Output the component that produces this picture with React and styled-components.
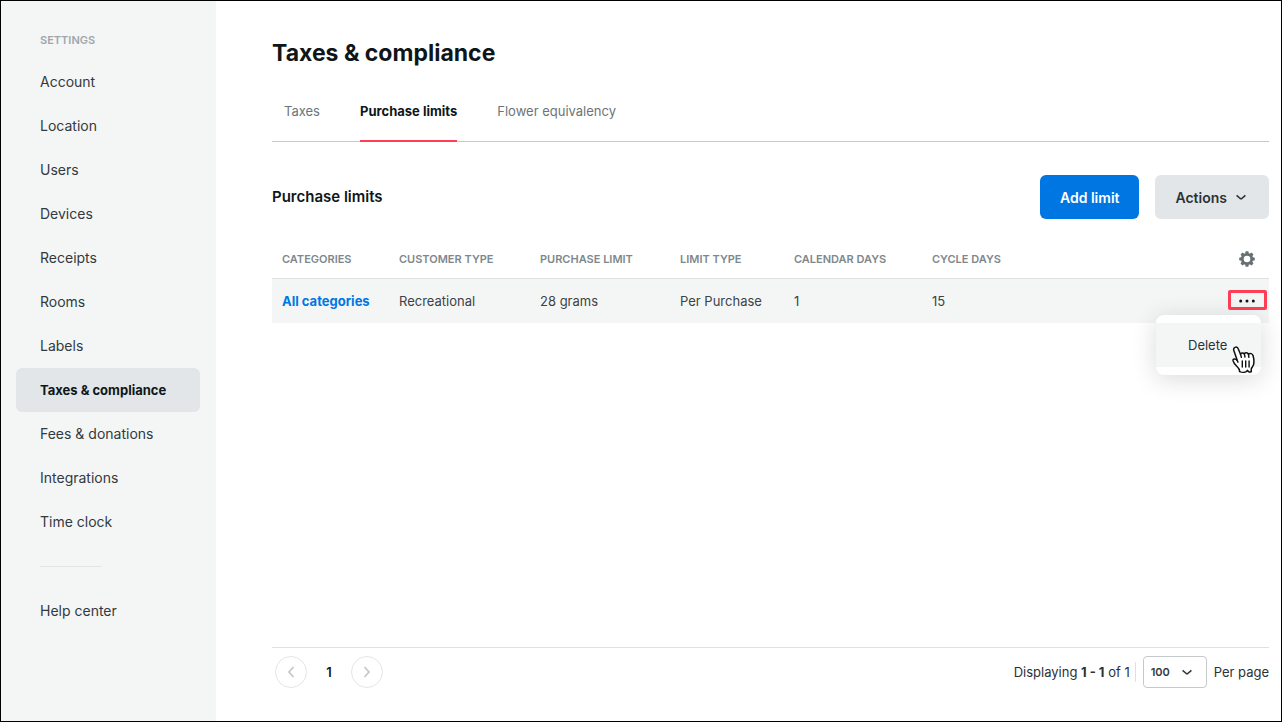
import React, { useState } from 'react';
import styled, { createGlobalStyle } from 'styled-components';

const GlobalStyle = createGlobalStyle`
  * {
    box-sizing: border-box;
  }

  body {
    margin: 0;
    background: #ffffff;
    color: #101618;
    font-family: Inter, "Liberation Sans", sans-serif;
    font-size: 14px;
    line-height: 20px;
  }

  button, select {
    font-family: inherit;
    margin: 0;
  }
`;

const Page = styled.div`
  display: flex;
  min-height: 100vh;
  outline: 1px solid #000000;
  outline-offset: -1px;
`;

// Sidebar
const Sidebar = styled.nav`
  flex: 0 0 216px;
  padding: 32px 16px;
  background: #f4f6f6;
`;

const SidebarTitle = styled.h2`
  margin: 0 24px 12px;
  color: #9fa7ab;
  font-size: 11px;
  font-weight: 600;
  line-height: 16px;
  text-transform: uppercase;
`;

const NavLink = styled.a`
  display: flex;
  align-items: center;
  height: 44px;
  padding: 0 24px;
  border-radius: 6px;
  background: ${(props) => (props.$active ? '#e2e6e9' : 'transparent')};
  color: ${(props) => (props.$active ? '#101618' : '#33393d')};
  font-size: ${(props) => (props.$active ? '13px' : '14px')};
  font-weight: ${(props) => (props.$active ? 700 : 400)};
  text-decoration: none;
  white-space: nowrap;
`;

const NavDivider = styled.hr`
  width: 62px;
  height: 1px;
  margin: 22px 24px;
  border: none;
  background: #e2e6e9;
`;

// Main column
const Main = styled.main`
  display: flex;
  flex: 1;
  flex-direction: column;
  min-width: 0;
  padding: 37px 13px 34px 56px;
`;

const PageTitle = styled.h1`
  margin: 0 0 32px;
  font-size: 23px;
  font-weight: 700;
  line-height: 32px;
`;

const Tabs = styled.div`
  display: flex;
  gap: 40px;
  padding: 0 12px;
  border-bottom: 1px solid #c5c9cb;
`;

const Tab = styled.button`
  margin-bottom: -1px;
  padding: 0 0 19px;
  border: none;
  border-bottom: 2px solid ${(props) => (props.$active ? '#ff3f55' : 'transparent')};
  background: none;
  color: ${(props) => (props.$active ? '#101618' : '#6b7579')};
  font-size: 13px;
  font-weight: ${(props) => (props.$active ? 700 : 400)};
  line-height: 20px;
  cursor: pointer;
`;

const SectionHeader = styled.div`
  display: flex;
  align-items: center;
  justify-content: space-between;
  margin: 33px 0 20px;
`;

const SectionTitle = styled.h2`
  margin: 0;
  font-size: 15px;
  font-weight: 600;
  line-height: 20px;
`;

const ButtonGroup = styled.div`
  display: flex;
  gap: 16px;
`;

const Button = styled.button`
  display: flex;
  align-items: center;
  gap: 6px;
  height: 44px;
  padding: 0 20px;
  border: none;
  border-radius: 6px;
  background: ${(props) => (props.$primary ? '#0076e3' : '#e2e6e9')};
  color: ${(props) => (props.$primary ? '#ffffff' : '#2b3236')};
  font-size: 14px;
  font-weight: 600;
  cursor: pointer;
`;

// Table
const Table = styled.table`
  width: 100%;
  border-collapse: separate;
  border-spacing: 0;
  table-layout: fixed;
`;

const Column = styled.col`
  width: ${(props) => props.$width};
`;

const HeadCell = styled.th`
  height: 40px;
  padding: 0 10px;
  border-bottom: 1px solid #dde1e3;
  color: #7e888c;
  font-size: 11px;
  font-weight: 600;
  line-height: 16px;
  text-align: left;
  text-transform: uppercase;
  white-space: nowrap;
`;

const Cell = styled.td`
  height: 44px;
  padding: 0 10px;
  background: #f4f6f6;
  color: #3c4347;
  font-size: 13px;
  white-space: nowrap;
`;

const SettingsCell = styled(HeadCell)`
  padding: 0 14px;
`;

const MenuCell = styled(Cell)`
  position: relative;
  padding: 0 2px 2px;
`;

const CategoryLink = styled.a`
  color: #0076e3;
  font-weight: 700;
  text-decoration: none;
`;

const IconButton = styled.button`
  display: flex;
  margin-left: auto;
  padding: 0;
  border: none;
  background: none;
  color: #656f74;
  cursor: pointer;
`;

const MoreButton = styled.button`
  display: flex;
  align-items: center;
  justify-content: center;
  width: 39px;
  height: 20px;
  margin-left: auto;
  padding: 0;
  border: 3px solid #ff3f55;
  border-radius: 2px;
  background: none;
  color: #101618;
  cursor: pointer;
`;

const Menu = styled.div`
  position: absolute;
  top: 36px;
  right: 8px;
  z-index: 1;
  width: 105px;
  padding: 8px 0;
  border-radius: 8px;
  background: #ffffff;
  box-shadow: 0 4px 24px rgba(16, 22, 24, 0.16);
`;

const MenuItem = styled.button`
  display: block;
  width: 100%;
  height: 44px;
  padding: 0 32px;
  border: none;
  background: #f4f6f6;
  color: #2b3236;
  font-size: 13px;
  text-align: left;
  cursor: pointer;
`;

const Pointer = styled.svg`
  position: absolute;
  right: 5px;
  bottom: 1px;
  pointer-events: none;
`;

// Footer
const Footer = styled.footer`
  display: flex;
  align-items: center;
  justify-content: space-between;
  margin-top: auto;
  padding: 8px 0 0 3px;
  border-top: 1px solid #dde1e3;
`;

const Pager = styled.div`
  display: flex;
  align-items: center;
`;

const PagerButton = styled.button`
  display: flex;
  align-items: center;
  justify-content: center;
  width: 32px;
  height: 32px;
  padding: 0;
  border: 1px solid #e2e6e9;
  border-radius: 50%;
  background: #ffffff;
  color: #c3c9cc;
`;

const PageNumber = styled.span`
  width: 44px;
  font-size: 13px;
  font-weight: 600;
  text-align: center;
`;

const PageSize = styled.div`
  display: flex;
  align-items: center;
  gap: 7px;
  color: #2b3236;
  font-size: 13px;
`;

const Range = styled.span`
  padding-right: 5px;
  border-right: 1px solid #dde1e3;
`;

const SelectBox = styled.div`
  display: grid;
  align-items: center;
  color: #33393d;

  > * {
    grid-area: 1 / 1;
  }

  > svg {
    justify-self: end;
    margin-right: 12px;
    pointer-events: none;
  }
`;

const Select = styled.select`
  width: 64px;
  height: 32px;
  padding: 0 7px;
  appearance: none;
  border: 1px solid #c5c9cb;
  border-radius: 4px;
  background: #ffffff;
  color: #33393d;
  font-size: 11px;
  font-weight: 600;
`;

const ChevronDown = () => (
  <svg width="16" height="16" viewBox="0 0 16 16" fill="none" stroke="currentColor" strokeWidth="1.6" aria-hidden="true">
    <path d="M3.6 6.3 L7.2 9.5 Q8 10.1 8.8 9.5 L12.4 6.3" />
  </svg>
);

const Chevron = ({ next }) => (
  <svg width="8" height="12" viewBox="0 0 8 12" fill="none" stroke="currentColor" strokeWidth="1.8" aria-hidden="true">
    <path d={next ? 'M1.5 1 L6 6 L1.5 11' : 'M6.5 1 L2 6 L6.5 11'} />
  </svg>
);

const GEAR_TEETH = [0, 45, 90, 135, 180, 225, 270, 315];

const GearIcon = () => (
  <svg width="16" height="16" viewBox="0 0 16 16" aria-hidden="true">
    <circle cx="8" cy="8" r="4.7" fill="none" stroke="currentColor" strokeWidth="2.8" />
    {GEAR_TEETH.map((angle) => (
      <path key={angle} d="M6 2.8 L6.7 0.2 H9.3 L10 2.8 Z" fill="currentColor" transform={`rotate(${angle} 8 8)`} />
    ))}
  </svg>
);

const DotsIcon = () => (
  <svg width="17" height="6" viewBox="0 0 17 6" fill="currentColor" aria-hidden="true">
    <circle cx="1.7" cy="4" r="1.5" />
    <circle cx="8" cy="4" r="1.5" />
    <circle cx="14.3" cy="4" r="1.5" />
  </svg>
);

const HandPointer = () => (
  <Pointer width="24" height="28" viewBox="0 0 24 28" aria-hidden="true">
    <path
      d="M3 1.4 C4.6 0.6 5.8 1.6 6.3 3 L8.5 8.2 C9 6.6 11.3 6.4 12.3 7.9 C13.3 6.4 15.6 6.5 16.4 8.2 C18 6.8 20.6 7.6 21.1 9.8 C21.9 12.8 22.4 16 21.4 19 C20.8 20.8 19.3 22 19.2 23.2 L19.3 25.6 C18 26.5 16.4 26 15.5 24.4 C14.4 26.6 10.7 26.8 7.6 25.6 C7.8 23.2 6.4 21.8 4.8 20.3 C3.1 18.6 1.5 17 1 14.7 C0.7 12.7 3.2 12.3 5.3 14.4 L2 5 C1.3 3.3 1.7 2 3 1.4 Z"
      fill="#ffffff"
      stroke="#101010"
      strokeWidth="1.5"
      strokeLinejoin="round"
    />
    <path
      d="M8.5 8.2 L9.4 11.4 M12.3 7.9 L13 11 M16.4 8.2 L16.9 11.4 M5.3 14.4 L6 16.2 M10.3 15 V21 M13.7 15 V21 M17.1 15 V21"
      fill="none"
      stroke="#101010"
      strokeWidth="1.4"
      strokeLinecap="round"
    />
  </Pointer>
);

const navItems = [
  'Account',
  'Location',
  'Users',
  'Devices',
  'Receipts',
  'Rooms',
  'Labels',
  'Taxes & compliance',
  'Fees & donations',
  'Integrations',
  'Time clock',
];

const tabs = ['Taxes', 'Purchase limits', 'Flower equivalency'];

const columns = [
  { label: 'Categories', width: '117px' },
  { label: 'Customer type', width: '141px' },
  { label: 'Purchase limit', width: '140px' },
  { label: 'Limit type', width: '114px' },
  { label: 'Calendar days', width: '138px' },
  { label: 'Cycle days', width: '120px' },
];

const limits = [
  { id: 1, category: 'All categories', values: ['Recreational', '28 grams', 'Per Purchase', '1', '15'] },
];

const App = () => {
  const [activeTab, setActiveTab] = useState('Purchase limits');
  const [openMenu, setOpenMenu] = useState(1);

  return (
    <>
      <GlobalStyle />
      <Page>
        <Sidebar>
          <SidebarTitle>Settings</SidebarTitle>
          {navItems.map((item) => (
            <NavLink key={item} href="#" $active={item === 'Taxes & compliance'}>
              {item}
            </NavLink>
          ))}
          <NavDivider />
          <NavLink href="#">Help center</NavLink>
        </Sidebar>

        <Main>
          <PageTitle>Taxes &amp; compliance</PageTitle>
          <Tabs role="tablist">
            {tabs.map((tab) => (
              <Tab
                key={tab}
                role="tab"
                aria-selected={tab === activeTab}
                $active={tab === activeTab}
                onClick={() => setActiveTab(tab)}
              >
                {tab}
              </Tab>
            ))}
          </Tabs>

          <SectionHeader>
            <SectionTitle>Purchase limits</SectionTitle>
            <ButtonGroup>
              <Button $primary>Add limit</Button>
              <Button>
                Actions
                <ChevronDown />
              </Button>
            </ButtonGroup>
          </SectionHeader>

          <Table>
            <colgroup>
              {columns.map((column) => (
                <Column key={column.label} $width={column.width} />
              ))}
              <Column $width="auto" />
            </colgroup>
            <thead>
              <tr>
                {columns.map((column) => (
                  <HeadCell key={column.label}>{column.label}</HeadCell>
                ))}
                <SettingsCell>
                  <IconButton aria-label="Table settings">
                    <GearIcon />
                  </IconButton>
                </SettingsCell>
              </tr>
            </thead>
            <tbody>
              {limits.map((limit) => (
                <tr key={limit.id}>
                  <Cell>
                    <CategoryLink href="#">{limit.category}</CategoryLink>
                  </Cell>
                  {limit.values.map((value) => (
                    <Cell key={value}>{value}</Cell>
                  ))}
                  <MenuCell>
                    <MoreButton
                      aria-label="More options"
                      onClick={() => setOpenMenu(openMenu === limit.id ? null : limit.id)}
                    >
                      <DotsIcon />
                    </MoreButton>
                    {openMenu === limit.id && (
                      <Menu>
                        <MenuItem>Delete</MenuItem>
                        <HandPointer />
                      </Menu>
                    )}
                  </MenuCell>
                </tr>
              ))}
            </tbody>
          </Table>

          <Footer>
            <Pager>
              <PagerButton aria-label="Previous page" disabled>
                <Chevron />
              </PagerButton>
              <PageNumber>1</PageNumber>
              <PagerButton aria-label="Next page" disabled>
                <Chevron next />
              </PagerButton>
            </Pager>
            <PageSize>
              <Range>
                Displaying <b>1 - 1</b> of 1
              </Range>
              <SelectBox>
                <Select id="page-size" defaultValue="100">
                  <option value="25">25</option>
                  <option value="50">50</option>
                  <option value="100">100</option>
                </Select>
                <ChevronDown />
              </SelectBox>
              <label htmlFor="page-size">Per page</label>
            </PageSize>
          </Footer>
        </Main>
      </Page>
    </>
  );
};

export default App;
